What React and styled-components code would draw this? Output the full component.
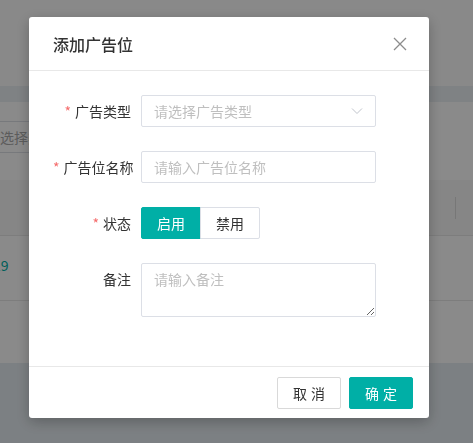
import React from "react";
import styled, { createGlobalStyle } from "styled-components";

const GlobalStyle = createGlobalStyle`
  html, body {
    margin: 0;
    padding: 0;
    overflow: hidden;
  }
  body {
    font-family: "Noto Sans CJK SC", "Noto Sans", sans-serif;
    background: #ffffff;
  }
`;

const teal = "#00afa6";

/* ---------- page behind the dialog ---------- */

const Page = styled.div`
  width: 473px;
  height: 443px;
  overflow: hidden;
  background: #ffffff;
  display: flex;
  flex-direction: column;
`;

const TopBar = styled.div`
  height: 86px;
  background: #fdfdfd;
  flex-shrink: 0;
`;

const Strip = styled.div`
  height: 16px;
  background: #ebf0f4;
  flex-shrink: 0;
`;

const FilterRow = styled.div`
  height: 78px;
  display: flex;
  align-items: center;
  flex-shrink: 0;
`;

const FilterInput = styled.div`
  margin-left: -27px;
  margin-top: -8px;
  width: 160px;
  height: 30px;
  border: 1px solid #dcdfe6;
  border-radius: 2px;
  display: flex;
  align-items: center;
  padding-left: 12px;
  font-size: 14px;
  color: #aaaaaa;
`;

const TableHead = styled.div`
  height: 55px;
  background: #f7f7f7;
  border-bottom: 1px solid #e8e8e8;
  display: flex;
  justify-content: flex-end;
  align-items: center;
  padding-right: 17px;
  flex-shrink: 0;
`;

const ColDivider = styled.div`
  width: 1px;
  height: 22px;
  background: #dddddd;
`;

const TableRow = styled.div`
  height: 64px;
  border-bottom: 1px solid #e8e8e8;
  display: flex;
  align-items: center;
  font-size: 14px;
  color: ${teal};
  flex-shrink: 0;
`;

const RowLink = styled.span`
  margin-left: -7px;
  margin-top: -6px;
`;

const Blank = styled.div`
  height: 62px;
  background: #ffffff;
  flex-shrink: 0;
`;

const FooterArea = styled.div`
  flex: 1;
  background: #e6edf2;
`;

/* ---------- overlay + dialog ---------- */

const Overlay = styled.div`
  position: fixed;
  inset: 0;
  background: rgba(0, 0, 0, 0.46);
  display: flex;
  align-items: flex-start;
  padding: 17px 0 0 29px;
`;

const Dialog = styled.div`
  width: 400px;
  background: #ffffff;
  border-radius: 3px;
  box-shadow: 0 4px 14px rgba(0, 0, 0, 0.25);
  display: flex;
  flex-direction: column;
`;

const Header = styled.div`
  height: 54px;
  box-sizing: border-box;
  padding: 0 24px;
  border-bottom: 1px solid #e8e8e8;
  display: flex;
  align-items: center;
  justify-content: space-between;
`;

const Title = styled.div`
  font-size: 16px;
  font-weight: 500;
  color: #333333;
`;

const CloseBtn = styled.button`
  border: none;
  background: none;
  padding: 0;
  margin-right: -3px;
  width: 16px;
  height: 16px;
  display: flex;
  align-items: center;
  justify-content: center;
  cursor: pointer;
`;

const Body = styled.div`
  padding: 24px 24px 49px;
  display: flex;
  flex-direction: column;
  gap: 24px;
`;

const FormItem = styled.div`
  display: flex;
  align-items: ${(p) => (p.$top ? "flex-start" : "center")};
`;

const Label = styled.label`
  width: 78px;
  padding-right: 10px;
  text-align: right;
  font-size: 14px;
  color: #333333;
  line-height: 32px;
  white-space: nowrap;
  flex-shrink: 0;
`;

const Star = styled.span`
  color: #f56c6c;
  margin-right: 4px;
`;

const fieldBase = `
  box-sizing: border-box;
  width: 235px;
  border: 1px solid #dcdfe6;
  border-radius: 2px;
  font-family: "Noto Sans CJK SC", "Noto Sans", sans-serif;
  font-size: 14px;
  color: #333333;
  background: #ffffff;
  outline: none;
  &::placeholder {
    color: #bfbfbf;
  }
`;

const SelectBox = styled.div`
  ${fieldBase}
  height: 32px;
  padding: 0 12px;
  display: flex;
  align-items: center;
  justify-content: space-between;
  color: #bfbfbf;
`;

const TextInput = styled.input`
  ${fieldBase}
  height: 32px;
  padding: 0 12px;
`;

const TextArea = styled.textarea`
  ${fieldBase}
  height: 54px;
  padding: 4px 12px;
  line-height: 22px;
  display: block;
`;

const Segment = styled.div`
  display: flex;
`;

const SegBtn = styled.button`
  box-sizing: border-box;
  width: 60px;
  height: 32px;
  font-family: inherit;
  font-size: 14px;
  border: 1px solid ${(p) => (p.$active ? teal : "#dcdfe6")};
  background: ${(p) => (p.$active ? teal : "#ffffff")};
  color: ${(p) => (p.$active ? "#ffffff" : "#333333")};
  border-radius: ${(p) => (p.$first ? "2px 0 0 2px" : "0 2px 2px 0")};
  margin-left: ${(p) => (p.$first ? "0" : "-1px")};
  cursor: pointer;
  padding: 0;
`;

const Footer = styled.div`
  border-top: 1px solid #e8e8e8;
  padding: 10px 16px 9px;
  display: flex;
  justify-content: flex-end;
  gap: 8px;
`;

const FootBtn = styled.button`
  box-sizing: border-box;
  width: 64px;
  height: 32px;
  border-radius: 2px;
  font-family: inherit;
  font-size: 14px;
  letter-spacing: 4px;
  text-indent: 4px;
  padding: 0;
  cursor: pointer;
  border: 1px solid ${(p) => (p.$primary ? teal : "#d9d9d9")};
  background: ${(p) => (p.$primary ? teal : "#ffffff")};
  color: ${(p) => (p.$primary ? "#ffffff" : "#333333")};
`;

function CloseIcon() {
  return (
    <svg width="14" height="14" viewBox="0 0 14 14">
      <path d="M1 1 L13 13 M13 1 L1 13" stroke="#8c8c8c" strokeWidth="1.3" fill="none" />
    </svg>
  );
}

function ChevronDown() {
  return (
    <svg width="12" height="8" viewBox="0 0 12 8">
      <path d="M1 1.5 L6 6.5 L11 1.5" stroke="#c0c4cc" strokeWidth="1" fill="none" />
    </svg>
  );
}

export default function App() {
  return (
    <>
      <GlobalStyle />
      <Page>
        <TopBar />
        <Strip />
        <FilterRow>
          <FilterInput>请选择类型</FilterInput>
        </FilterRow>
        <TableHead>
          <ColDivider />
        </TableHead>
        <TableRow>
          <RowLink>19</RowLink>
        </TableRow>
        <Blank />
        <FooterArea />
      </Page>

      <Overlay>
        <Dialog>
          <Header>
            <Title>添加广告位</Title>
            <CloseBtn aria-label="关闭">
              <CloseIcon />
            </CloseBtn>
          </Header>

          <Body>
            <FormItem>
              <Label>
                <Star>*</Star>广告类型
              </Label>
              <SelectBox>
                <span>请选择广告类型</span>
                <ChevronDown />
              </SelectBox>
            </FormItem>

            <FormItem>
              <Label>
                <Star>*</Star>广告位名称
              </Label>
              <TextInput placeholder="请输入广告位名称" />
            </FormItem>

            <FormItem>
              <Label>
                <Star>*</Star>状态
              </Label>
              <Segment>
                <SegBtn $active $first>
                  启用
                </SegBtn>
                <SegBtn>禁用</SegBtn>
              </Segment>
            </FormItem>

            <FormItem $top>
              <Label>备注</Label>
              <TextArea placeholder="请输入备注" />
            </FormItem>
          </Body>

          <Footer>
            <FootBtn>取消</FootBtn>
            <FootBtn $primary>确定</FootBtn>
          </Footer>
        </Dialog>
      </Overlay>
    </>
  );
}
